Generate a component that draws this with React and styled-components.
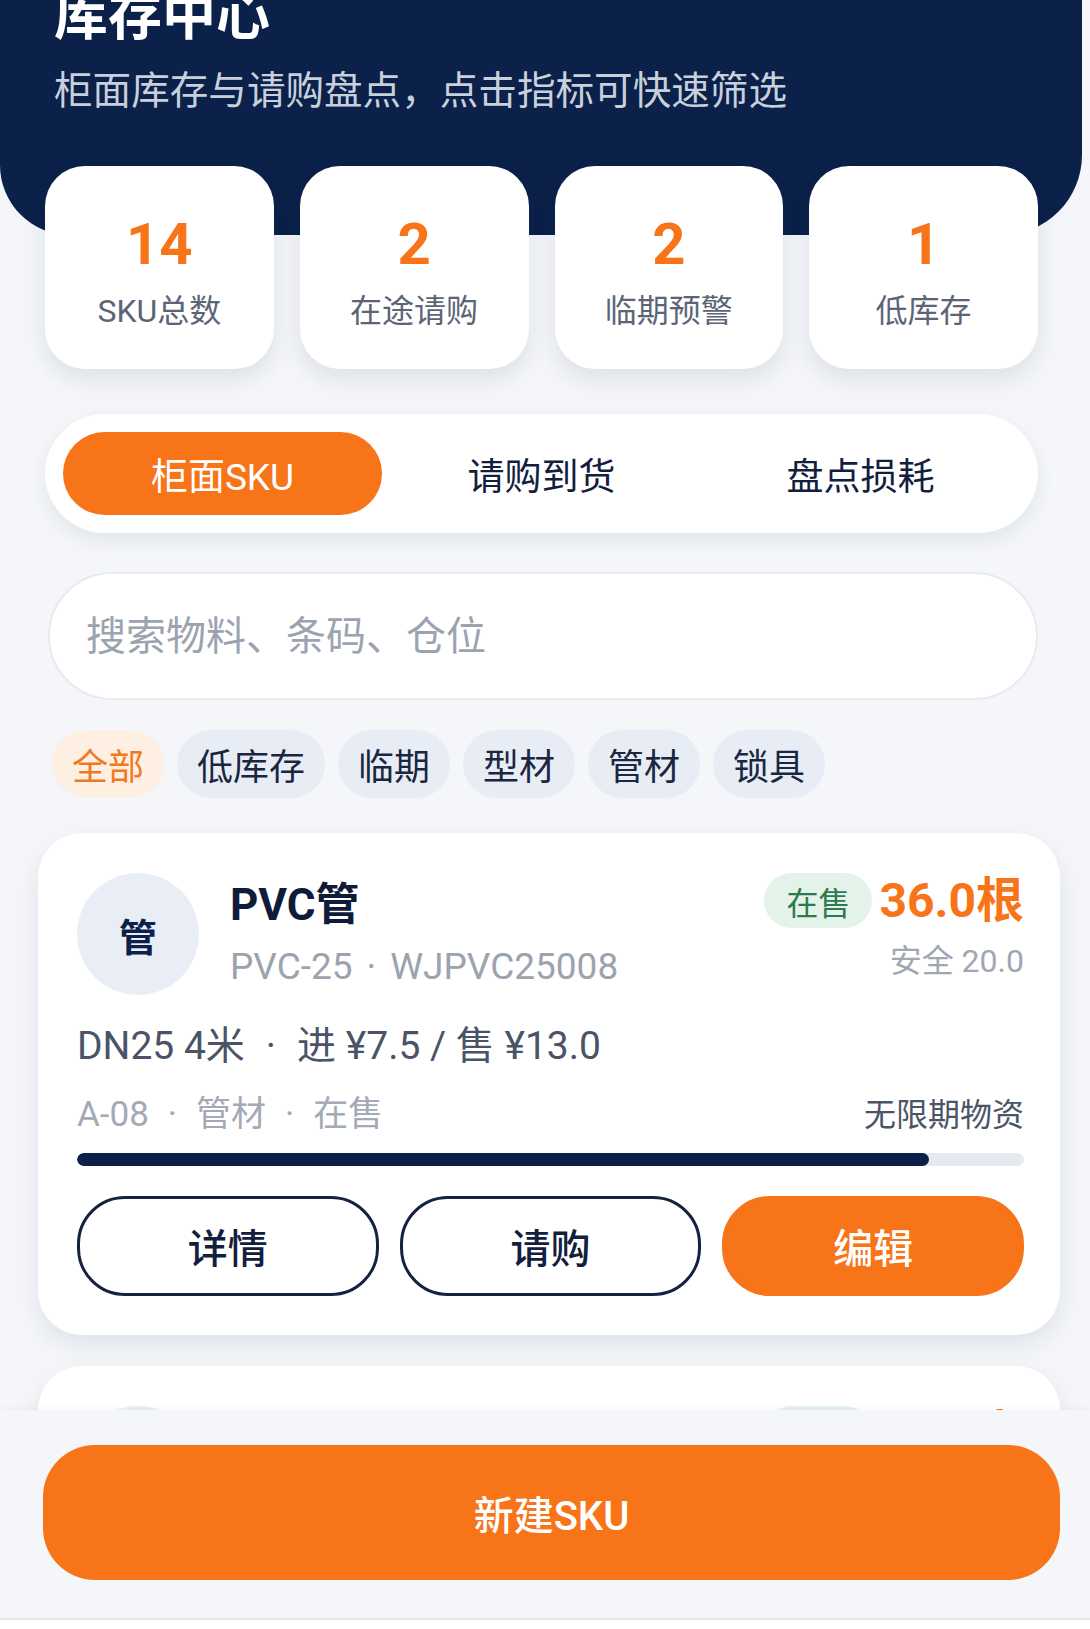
import React from 'react';
import styled, { createGlobalStyle } from 'styled-components';

const NAVY = '#0b2149';
const ORANGE = '#f77418';
const INK = '#12203d';

const GlobalStyle = createGlobalStyle`
  html, body { margin: 0; padding: 0; background: #ffffff; }
  body {
    font-family: Roboto, "Noto Sans CJK SC", "Noto Sans", sans-serif;
    -webkit-font-smoothing: antialiased;
  }
  * { box-sizing: border-box; }
`;

const Screen = styled.div`
  height: 1620px;
  display: flex;
  flex-direction: column;
  background: #f4f6f9;
  border-bottom: 2px solid #e3e6eb;
  overflow: hidden;
`;

const Scroll = styled.main`
  flex: 1;
  min-height: 0;
  overflow: hidden;
`;

/* the page is shown slightly scrolled, so the title is cut at the top */
const ScrollContent = styled.div`
  margin-top: -14px;
  padding-bottom: 40px;
`;

const Header = styled.header`
  background: ${NAVY};
  margin-right: 8px;
  height: 249px;
  padding: 0 54px;
  border-radius: 0 0 80px 70px;
`;

const Title = styled.h1`
  margin: 0;
  font-size: 54px;
  line-height: 62px;
  font-weight: 700;
  color: #ffffff;
`;

const Subtitle = styled.p`
  margin: 20px 0 0;
  font-size: 38.6px;
  line-height: 46px;
  color: #c8d0dd;
`;

const StatGrid = styled.section`
  margin-top: -69px;
  padding: 0 52px 0 45px;
  display: grid;
  grid-template-columns: repeat(4, 1fr);
  gap: 26px;
`;

const StatCard = styled.button`
  height: 203px;
  border: none;
  background: #ffffff;
  border-radius: 40px;
  box-shadow: 0 10px 24px rgba(16, 33, 70, 0.1);
  display: flex;
  flex-direction: column;
  align-items: center;
  padding: 49px 0 0;
  font-family: inherit;
`;

const StatValue = styled.span`
  font-size: 58px;
  line-height: 58px;
  font-weight: 700;
  color: ${ORANGE};
`;

const StatLabel = styled.span`
  margin-top: 19px;
  font-size: 32px;
  line-height: 38px;
  color: #5c6576;
`;

const TabBar = styled.nav`
  margin: 45px 52px 0 45px;
  padding: 18px;
  background: #ffffff;
  border-radius: 60px;
  box-shadow: 0 8px 20px rgba(16, 33, 70, 0.08);
  display: grid;
  grid-template-columns: repeat(3, 1fr);
`;

const Tab = styled.button`
  height: 83px;
  border: none;
  border-radius: 42px;
  font-family: inherit;
  font-size: 37px;
  font-weight: 400;
  background: ${(p) => (p.$active ? ORANGE : 'transparent')};
  color: ${(p) => (p.$active ? '#ffffff' : INK)};
  display: flex;
  align-items: center;
  justify-content: center;
`;

const SearchBox = styled.label`
  margin: 39px 52px 0 48px;
  height: 128px;
  border-radius: 64px;
  border: 2px solid #e7ebf1;
  background: #ffffff;
  display: flex;
  align-items: center;
  padding: 0 34px;
`;

const SearchInput = styled.input`
  flex: 1;
  border: none;
  outline: none;
  background: transparent;
  font-family: inherit;
  font-size: 40px;
  color: ${INK};
  &::placeholder { color: #9ba3b0; }
`;

const ChipRow = styled.div`
  margin: 30px 0 0 52px;
  display: flex;
  gap: 13px;
`;

const Chip = styled.button`
  height: 68px;
  padding: 0 20px;
  border: none;
  border-radius: 34px;
  font-family: inherit;
  font-size: 36px;
  background: ${(p) => (p.$active ? '#fdf0e3' : '#e8edf5')};
  color: ${(p) => (p.$active ? '#f1791f' : '#1b2640')};
`;

const List = styled.section`
  margin-top: 35px;
  padding: 0 30px 0 38px;
  display: flex;
  flex-direction: column;
  gap: 31px;
`;

const Card = styled.article`
  background: #ffffff;
  border-radius: 44px;
  padding: 40px 36px 39px 39px;
  box-shadow: 0 10px 26px rgba(16, 33, 70, 0.09);
`;

const TopRow = styled.div`
  display: flex;
  align-items: flex-start;
`;

const Avatar = styled.div`
  width: 122px;
  height: 122px;
  flex-shrink: 0;
  border-radius: 50%;
  background: #e9eef6;
  display: flex;
  align-items: center;
  justify-content: center;
  font-size: 38px;
  font-weight: 700;
  color: ${NAVY};
`;

const Info = styled.div`
  flex: 1;
  margin: 6px 0 0 31px;
`;

const Name = styled.div`
  font-size: 44px;
  line-height: 52px;
  font-weight: 700;
  color: #0e1c3a;
`;

const Code = styled.div`
  margin-top: 14px;
  font-size: 37px;
  line-height: 44px;
  color: #9ca3ae;
`;

const Dot = styled.span`
  margin: 0 ${(p) => p.$space || 14}px;
`;

const Side = styled.div`
  display: flex;
  flex-direction: column;
  align-items: flex-end;
`;

const SideTop = styled.div`
  display: flex;
  align-items: center;
  gap: 7px;
`;

const Badge = styled.span`
  height: 55px;
  padding: 0 22px;
  border-radius: 28px;
  background: #e4f3e9;
  color: #2d7a4e;
  font-size: 32px;
  display: flex;
  align-items: center;
`;

const Qty = styled.span`
  font-size: 48px;
  line-height: 55px;
  font-weight: 700;
  color: ${ORANGE};
`;

const Safety = styled.div`
  margin-top: 14px;
  font-size: 32px;
  line-height: 38px;
  color: #a0a7b2;
`;

const Spec = styled.div`
  margin-top: 29px;
  font-size: 39px;
  line-height: 44px;
  color: #4a5466;
`;

const MetaRow = styled.div`
  margin-top: 26px;
  display: flex;
  justify-content: space-between;
  align-items: center;
`;

const Meta = styled.span`
  font-size: 35px;
  line-height: 42px;
  color: #a3aab6;
`;

const Expiry = styled.span`
  font-size: 32px;
  line-height: 42px;
  color: #4b5567;
`;

const Track = styled.div`
  margin-top: 17px;
  height: 13px;
  border-radius: 7px;
  background: #e6eaf0;
  overflow: hidden;
`;

const Fill = styled.div`
  height: 100%;
  border-radius: 7px;
  background: ${NAVY};
`;

const Actions = styled.div`
  margin-top: 30px;
  display: grid;
  grid-template-columns: repeat(3, 1fr);
  gap: 21px;
`;

const ActionButton = styled.button`
  height: 100px;
  border-radius: 48px;
  font-family: inherit;
  font-size: 40px;
  font-weight: 500;
  border: 3px solid ${(p) => (p.$primary ? ORANGE : '#14213f')};
  background: ${(p) => (p.$primary ? ORANGE : '#ffffff')};
  color: ${(p) => (p.$primary ? '#ffffff' : INK)};
`;

const Footer = styled.footer`
  flex-shrink: 0;
  padding: 35px 30px 38px 43px;
  background: #f4f6f9;
  box-shadow: 0 -2px 6px rgba(16, 33, 70, 0.03);
`;

const CreateButton = styled.button`
  display: block;
  width: 100%;
  height: 135px;
  border: none;
  border-radius: 52px;
  background: ${ORANGE};
  color: #ffffff;
  font-family: inherit;
  font-size: 40px;
  font-weight: 500;
`;

const stats = [
  { value: '14', label: 'SKU总数' },
  { value: '2', label: '在途请购' },
  { value: '2', label: '临期预警' },
  { value: '1', label: '低库存' },
];

const tabs = ['柜面SKU', '请购到货', '盘点损耗'];
const chips = ['全部', '低库存', '临期', '型材', '管材', '锁具'];

const items = [
  {
    avatar: '管',
    name: 'PVC管',
    code: ['PVC-25', 'WJPVC25008'],
    status: '在售',
    qty: '36.0根',
    safety: '安全 20.0',
    spec: ['DN25 4米', '进 ¥7.5 / 售 ¥13.0'],
    meta: ['A-08', '管材', '在售'],
    expiry: '无限期物资',
    ratio: 0.9,
  },
  {
    avatar: '型',
    name: '铝合金型材',
    code: ['AL-60', 'WJAL60012'],
    status: '在售',
    qty: '12.0支',
    safety: '安全 10.0',
    spec: ['60系列 6米', '进 ¥48.0 / 售 ¥72.0'],
    meta: ['B-02', '型材', '在售'],
    expiry: '无限期物资',
    ratio: 0.55,
  },
];

function Joined({ parts, space }) {
  return parts.map((p, i) => (
    <React.Fragment key={p + i}>
      {i > 0 && <Dot $space={space}>·</Dot>}
      {p}
    </React.Fragment>
  ));
}

function ProductCard({ item }) {
  return (
    <Card>
      <TopRow>
        <Avatar>{item.avatar}</Avatar>
        <Info>
          <Name>{item.name}</Name>
          <Code>
            <Joined parts={item.code} space={14} />
          </Code>
        </Info>
        <Side>
          <SideTop>
            <Badge>{item.status}</Badge>
            <Qty>{item.qty}</Qty>
          </SideTop>
          <Safety>{item.safety}</Safety>
        </Side>
      </TopRow>
      <Spec>
        <Joined parts={item.spec} space={21} />
      </Spec>
      <MetaRow>
        <Meta>
          <Joined parts={item.meta} space={19} />
        </Meta>
        <Expiry>{item.expiry}</Expiry>
      </MetaRow>
      <Track>
        <Fill style={{ width: `${item.ratio * 100}%` }} />
      </Track>
      <Actions>
        <ActionButton>详情</ActionButton>
        <ActionButton>请购</ActionButton>
        <ActionButton $primary>编辑</ActionButton>
      </Actions>
    </Card>
  );
}

export default function App() {
  return (
    <>
      <GlobalStyle />
      <Screen>
        <Scroll>
          <ScrollContent>
            <Header>
              <Title>库存中心</Title>
              <Subtitle>柜面库存与请购盘点，点击指标可快速筛选</Subtitle>
            </Header>
            <StatGrid>
              {stats.map((s) => (
                <StatCard key={s.label}>
                  <StatValue>{s.value}</StatValue>
                  <StatLabel>{s.label}</StatLabel>
                </StatCard>
              ))}
            </StatGrid>
            <TabBar>
              {tabs.map((t, i) => (
                <Tab key={t} $active={i === 0}>
                  {t}
                </Tab>
              ))}
            </TabBar>
            <SearchBox>
              <SearchInput placeholder="搜索物料、条码、仓位" />
            </SearchBox>
            <ChipRow>
              {chips.map((c, i) => (
                <Chip key={c} $active={i === 0}>
                  {c}
                </Chip>
              ))}
            </ChipRow>
            <List>
              {items.map((it) => (
                <ProductCard key={it.name} item={it} />
              ))}
            </List>
          </ScrollContent>
        </Scroll>
        <Footer>
          <CreateButton>新建SKU</CreateButton>
        </Footer>
      </Screen>
    </>
  );
}
